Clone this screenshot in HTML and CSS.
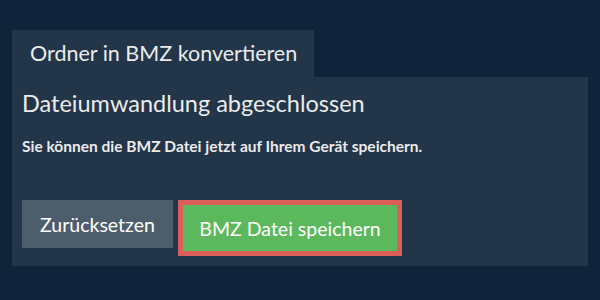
FILE: index.html
```html
<!DOCTYPE html>
<html lang="de">
<head>
    <meta charset="UTF-8">
    <title>Ordner in BMZ konvertieren</title>
    <link rel="stylesheet" href="styles.css">
</head>
<body>
<div class="converter">
    <div class="tabs">
        <div class="tab active">Ordner in BMZ konvertieren</div>
    </div>
    <div class="panel">
        <h2>Dateiumwandlung abgeschlossen</h2>
        <p class="note">Sie können die BMZ Datei jetzt auf Ihrem Gerät speichern.</p>
        <div class="actions">
            <button class="btn btn-reset">Zurücksetzen</button>
            <button class="btn btn-save">BMZ Datei speichern</button>
        </div>
    </div>
</div>
</body>
</html>
```

FILE: styles.css
```css
body {
    margin: 0;
    background-color: #11233a;
    font-family: Lato, "Open Sans", sans-serif;
    color: #ebebeb;
}

.converter {
    padding: 30px 12px 0 12px;
}

.tabs {
    display: flex;
}

.tab {
    background-color: #223549;
    width: 302px;
    height: 47px;
    padding-left: 18px;
    box-sizing: border-box;
    font-size: 21.5px;
    line-height: 46px;
    white-space: nowrap;
}

.panel {
    background-color: #223549;
    padding: 11px 10px 10px 10px;
}

.panel h2 {
    margin: 0;
    font-size: 23.5px;
    font-weight: normal;
    line-height: 30px;
}

.note {
    margin: 18px 0 0 0;
    font-size: 15.5px;
    font-weight: bold;
    line-height: 20px;
}

.actions {
    display: flex;
    align-items: flex-start;
    gap: 5px;
    margin-top: 44px;
}

.btn {
    font-family: inherit;
    font-size: 19.5px;
    color: #fff;
    border: none;
    padding: 0;
    cursor: pointer;
}

.btn-reset {
    background-color: #4e5d6c;
    width: 151px;
    height: 48px;
}

.btn-save {
    background-color: #5cb85c;
    border: 5px solid #dc5e5a;
    width: 224px;
    height: 56px;
}
```
